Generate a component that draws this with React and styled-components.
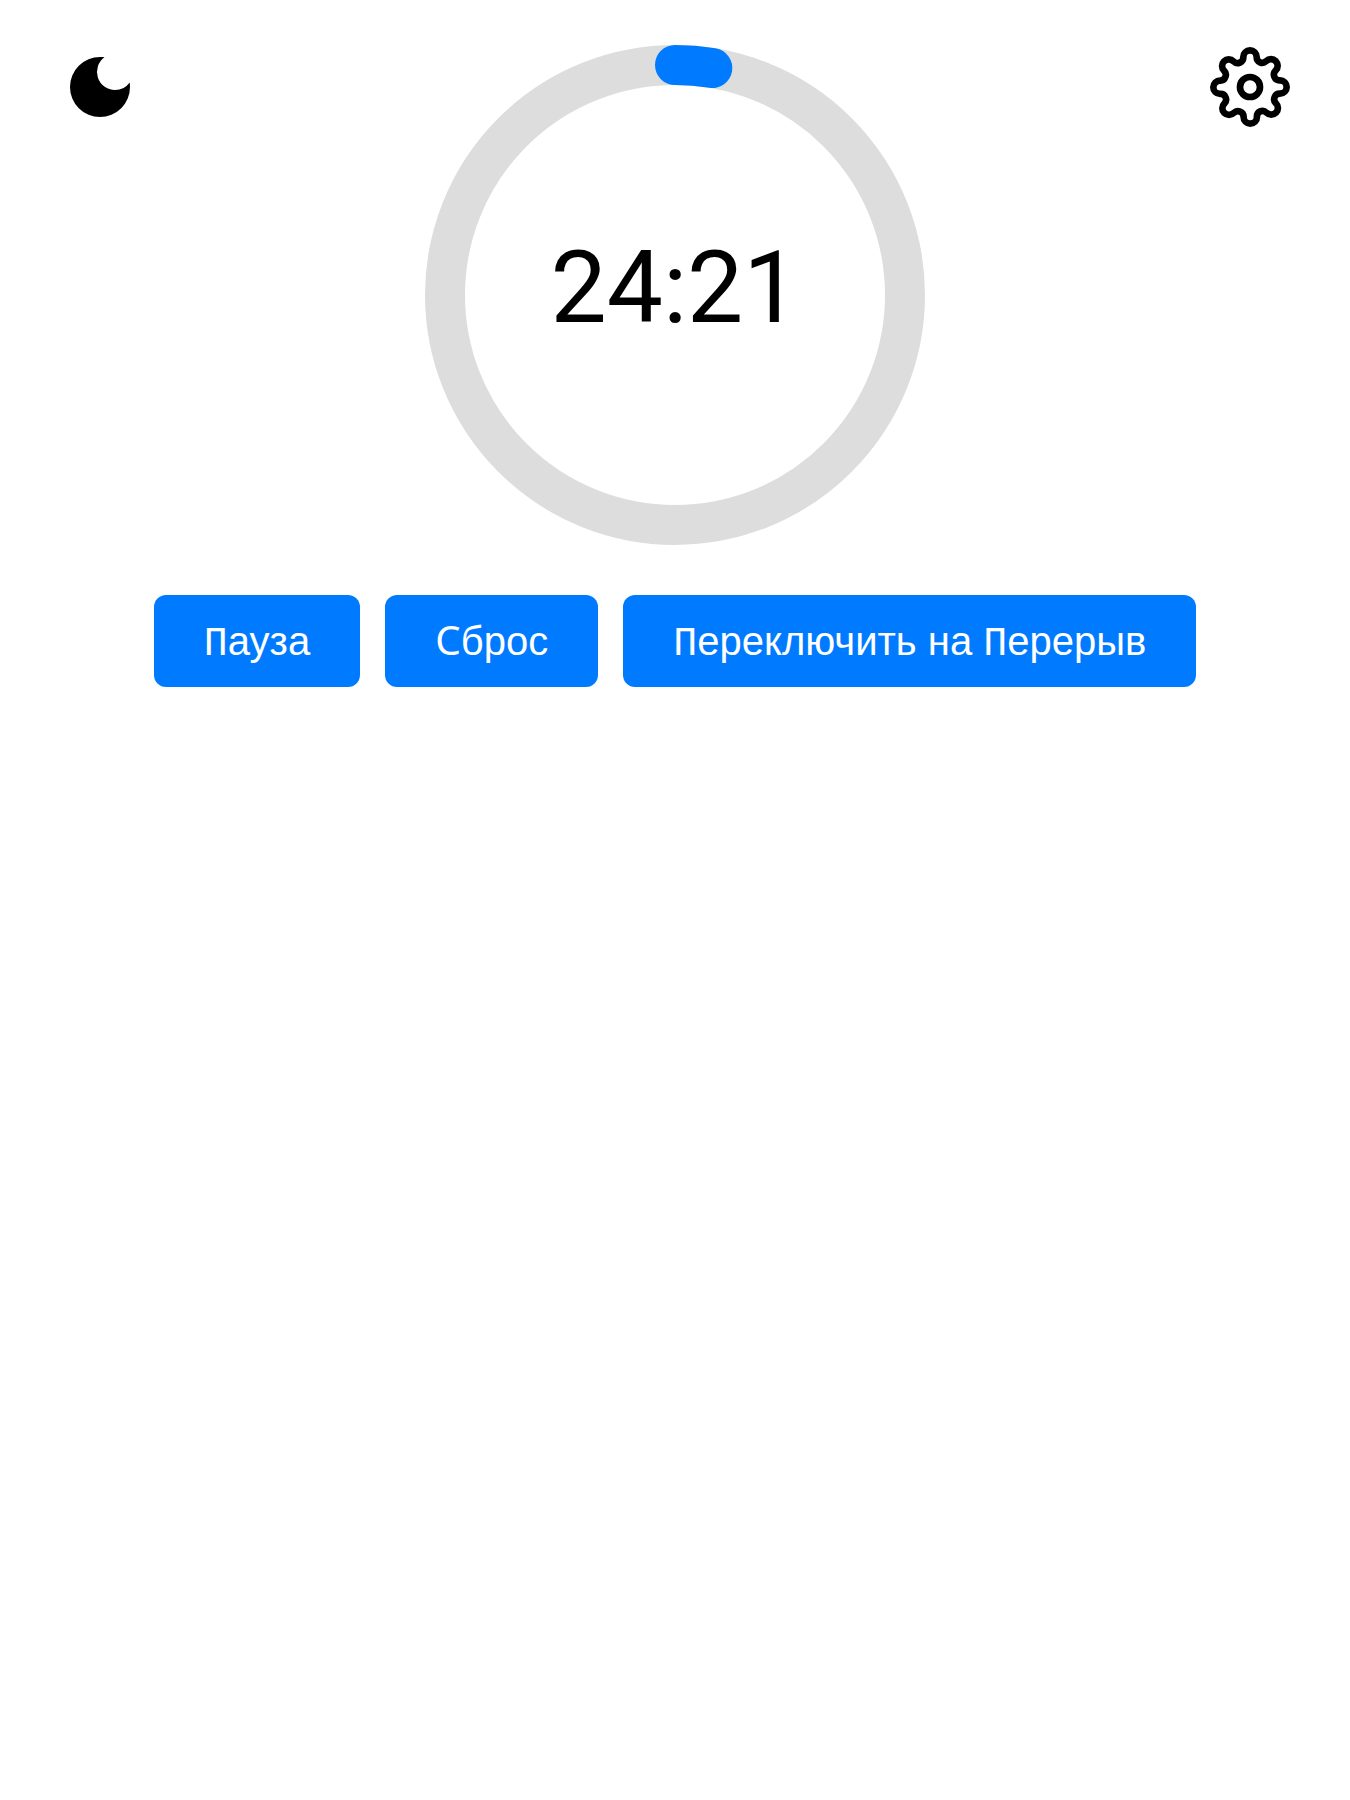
import React from 'react';
import styled, { createGlobalStyle } from 'styled-components';
import { FiSettings } from 'react-icons/fi';
import { MdDarkMode } from 'react-icons/md';

const TOTAL_SECONDS = 25 * 60;
const SECONDS_LEFT = 24 * 60 + 21;

const GlobalStyle = createGlobalStyle`
  body {
    margin: 0;
    background: #fff;
    color: #000;
    font-family: 'Liberation Sans', Arial, sans-serif;
  }
`;

const Page = styled.main`
  display: flex;
  flex-direction: column;
  gap: 50px;
  padding: 45px 60px;
`;

const TopRow = styled.header`
  display: flex;
  justify-content: space-between;
  align-items: flex-start;
`;

const IconButton = styled.button`
  display: flex;
  padding: 2px 0;
  border: 0;
  background: none;
  color: inherit;
  font-size: 80px;
  cursor: pointer;
`;

const Dial = styled.div`
  display: grid;
  place-items: center;

  > * {
    grid-area: 1 / 1;
  }
`;

const Ring = styled.svg`
  display: block;
  width: 500px;
  height: 500px;
  transform: rotate(-90deg);
`;

const RingCircle = styled.circle`
  fill: none;
  stroke: ${(p) => p.$color};
  stroke-width: 40px;
  stroke-linecap: round;
`;

const Time = styled.time`
  padding-bottom: 14px;
  font-family: Roboto, sans-serif;
  font-size: 100px;
  line-height: 120px;
`;

const Actions = styled.div`
  display: flex;
  justify-content: center;
  gap: 25px;
`;

const ActionButton = styled.button`
  padding: 24px 50px;
  border: 0;
  border-radius: 12px;
  background: #007bff;
  color: #fff;
  font-family: inherit;
  font-size: 40px;
  line-height: 44px;
  white-space: nowrap;
  cursor: pointer;
`;

const Capital = styled.span`
  font-family: ${(p) => (p.$narrow ? "'Liberation Mono', monospace" : "'Noto Sans', sans-serif")};
  line-height: 0;
`;

function ProgressRing({ progress }) {
  return (
    <Ring viewBox="0 0 500 500" aria-hidden="true">
      <RingCircle cx="250" cy="250" r="230" $color="#ddd" />
      <RingCircle
        cx="250"
        cy="250"
        r="230"
        pathLength="1"
        strokeDasharray={`${progress} 1`}
        $color="#007bff"
      />
    </Ring>
  );
}

export default function App() {
  const minutes = Math.floor(SECONDS_LEFT / 60);
  const seconds = String(SECONDS_LEFT % 60).padStart(2, '0');

  return (
    <>
      <GlobalStyle />
      <Page>
        <TopRow>
          <IconButton type="button" aria-label="Тема">
            <MdDarkMode />
          </IconButton>
          <Dial>
            <ProgressRing progress={1 - SECONDS_LEFT / TOTAL_SECONDS} />
            <Time>{`${minutes}:${seconds}`}</Time>
          </Dial>
          <IconButton type="button" aria-label="Настройки">
            <FiSettings />
          </IconButton>
        </TopRow>
        <Actions>
          <ActionButton type="button">
            <Capital $narrow>П</Capital>ауза
          </ActionButton>
          <ActionButton type="button">
            <Capital>С</Capital>брос
          </ActionButton>
          <ActionButton type="button">
            <Capital $narrow>П</Capital>ереключить на <Capital $narrow>П</Capital>ерерыв
          </ActionButton>
        </Actions>
      </Page>
    </>
  );
}
